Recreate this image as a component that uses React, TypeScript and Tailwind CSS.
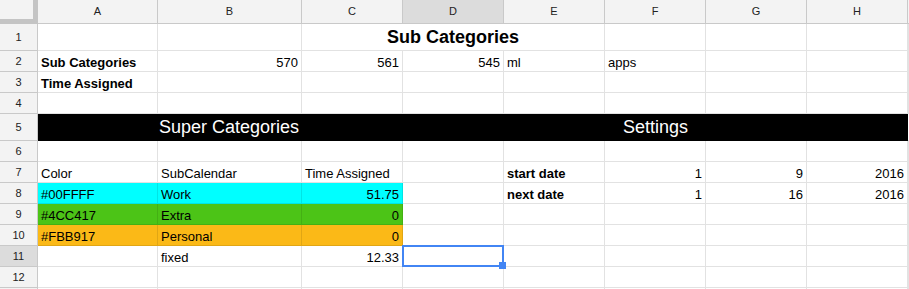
import React from "react";

const GRID = "grid grid-cols-[38px_120px_144px_101px_101px_101px_101px_101px_101px_1fr]";
const LINE = "border-r border-b border-[#e2e2e2]";

function RowHead({ n, active }: { n?: number; active?: boolean }) {
  return (
    <div
      className={`flex items-center justify-center border-r border-b border-[#c9c9c9] text-[11px] text-[#222] ${
        active ? "bg-[#dcdcdc]" : "bg-[#f3f3f3]"
      }`}
    >
      {n}
    </div>
  );
}

function C({
  children,
  right,
  bold,
  bg,
}: {
  children?: React.ReactNode;
  right?: boolean;
  bold?: boolean;
  bg?: string;
}) {
  return (
    <div
      className={`relative flex items-end whitespace-nowrap px-[3px] pb-[1px] text-[13px] leading-[15px] text-black ${
        right ? "justify-end" : "justify-start"
      } ${bold ? "font-bold" : ""} ${bg ?? ""} ${bg ? "border-r border-b border-black/10" : LINE}`}
    >
      {children}
    </div>
  );
}

function Empty({ n }: { n: number }) {
  return (
    <>
      {Array.from({ length: n }).map((_, i) => (
        <div key={i} className={LINE} />
      ))}
    </>
  );
}

export default function App() {
  const letters = ["A", "B", "C", "D", "E", "F", "G", "H"];
  return (
    <div className="h-[289px] w-[909px] overflow-hidden bg-white font-['Liberation_Sans',Arial,sans-serif]">
      {/* column headers */}
      <div className={`${GRID} h-[24px]`}>
        <div className="border-r-[5px] border-b-[5px] border-[#c4c4c4] bg-[#f3f3f3]" />
        {letters.map((l) => (
          <div
            key={l}
            className={`flex items-center justify-center border-r border-b border-[#c9c9c9] text-[11px] text-[#222] ${
              l === "D" ? "bg-[#dcdcdc]" : "bg-[#f3f3f3]"
            }`}
          >
            {l}
          </div>
        ))}
        <div className="border-b border-[#c9c9c9] bg-[#f3f3f3]" />
      </div>

      {/* row 1 */}
      <div className={`${GRID} h-[27px]`}>
        <RowHead n={1} />
        <Empty n={2} />
        <div className={`col-span-3 flex items-end justify-center pb-[2px] text-[18px] leading-[21px] font-bold text-black whitespace-nowrap ${LINE}`}>
          Sub Categories
        </div>
        <Empty n={4} />
      </div>

      {/* row 2 */}
      <div className={`${GRID} h-[21px]`}>
        <RowHead n={2} />
        <C bold>Sub Categories</C>
        <C right>570</C>
        <C right>561</C>
        <C right>545</C>
        <C>ml</C>
        <C>apps</C>
        <Empty n={3} />
      </div>

      {/* row 3 */}
      <div className={`${GRID} h-[21px]`}>
        <RowHead n={3} />
        <C bold>Time Assigned</C>
        <Empty n={8} />
      </div>

      {/* row 4 */}
      <div className={`${GRID} h-[21px]`}>
        <RowHead n={4} />
        <Empty n={9} />
      </div>

      {/* row 5 */}
      <div className={`${GRID} h-[27px]`}>
        <RowHead n={5} />
        <div className="border-b border-black bg-black" />
        <div className="col-span-3 flex items-end border-b border-black bg-black pb-[2px] pl-[1px] text-[18px] leading-[21px] text-white whitespace-nowrap">
          Super Categories
        </div>
        <div className="col-span-3 flex items-end justify-center border-b border-black bg-black pb-[2px] text-[18px] leading-[21px] text-white whitespace-nowrap">
          Settings
        </div>
        <div className="border-b border-black bg-black" />
        <div className="border-b border-[#e2e2e2]" />
      </div>

      {/* row 6 */}
      <div className={`${GRID} h-[21px]`}>
        <RowHead n={6} />
        <Empty n={9} />
      </div>

      {/* row 7 */}
      <div className={`${GRID} h-[21px]`}>
        <RowHead n={7} />
        <C>Color</C>
        <C>SubCalendar</C>
        <C>Time Assigned</C>
        <Empty n={1} />
        <C bold>start date</C>
        <C right>1</C>
        <C right>9</C>
        <C right>2016</C>
        <Empty n={1} />
      </div>

      {/* row 8 */}
      <div className={`${GRID} h-[21px]`}>
        <RowHead n={8} />
        <C bg="bg-[#00ffff]">#00FFFF</C>
        <C bg="bg-[#00ffff]">Work</C>
        <C bg="bg-[#00ffff]" right>51.75</C>
        <Empty n={1} />
        <C bold>next date</C>
        <C right>1</C>
        <C right>16</C>
        <C right>2016</C>
        <Empty n={1} />
      </div>

      {/* row 9 */}
      <div className={`${GRID} h-[21px]`}>
        <RowHead n={9} />
        <C bg="bg-[#4cc417]">#4CC417</C>
        <C bg="bg-[#4cc417]">Extra</C>
        <C bg="bg-[#4cc417]" right>0</C>
        <Empty n={6} />
      </div>

      {/* row 10 */}
      <div className={`${GRID} h-[21px]`}>
        <RowHead n={10} />
        <C bg="bg-[#fbb917]">#FBB917</C>
        <C bg="bg-[#fbb917]">Personal</C>
        <C bg="bg-[#fbb917]" right>0</C>
        <Empty n={6} />
      </div>

      {/* row 11 */}
      <div className={`${GRID} h-[21px]`}>
        <RowHead n={11} active />
        <C />
        <C>fixed</C>
        <C right>12.33</C>
        <div className={`relative ${LINE}`}>
          <div className="absolute -left-px -top-px z-10 h-[22px] w-[102px] border-2 border-[#4285f4]">
            <div className="absolute -bottom-[4px] -right-[4px] h-[7px] w-[7px] bg-[#4285f4]" />
          </div>
        </div>
        <Empty n={5} />
      </div>

      {/* row 12 */}
      <div className={`${GRID} h-[21px]`}>
        <RowHead n={12} />
        <Empty n={9} />
      </div>

      {/* row 13 partial */}
      <div className={`${GRID} h-[21px]`}>
        <RowHead />
        <Empty n={9} />
      </div>
    </div>
  );
}
